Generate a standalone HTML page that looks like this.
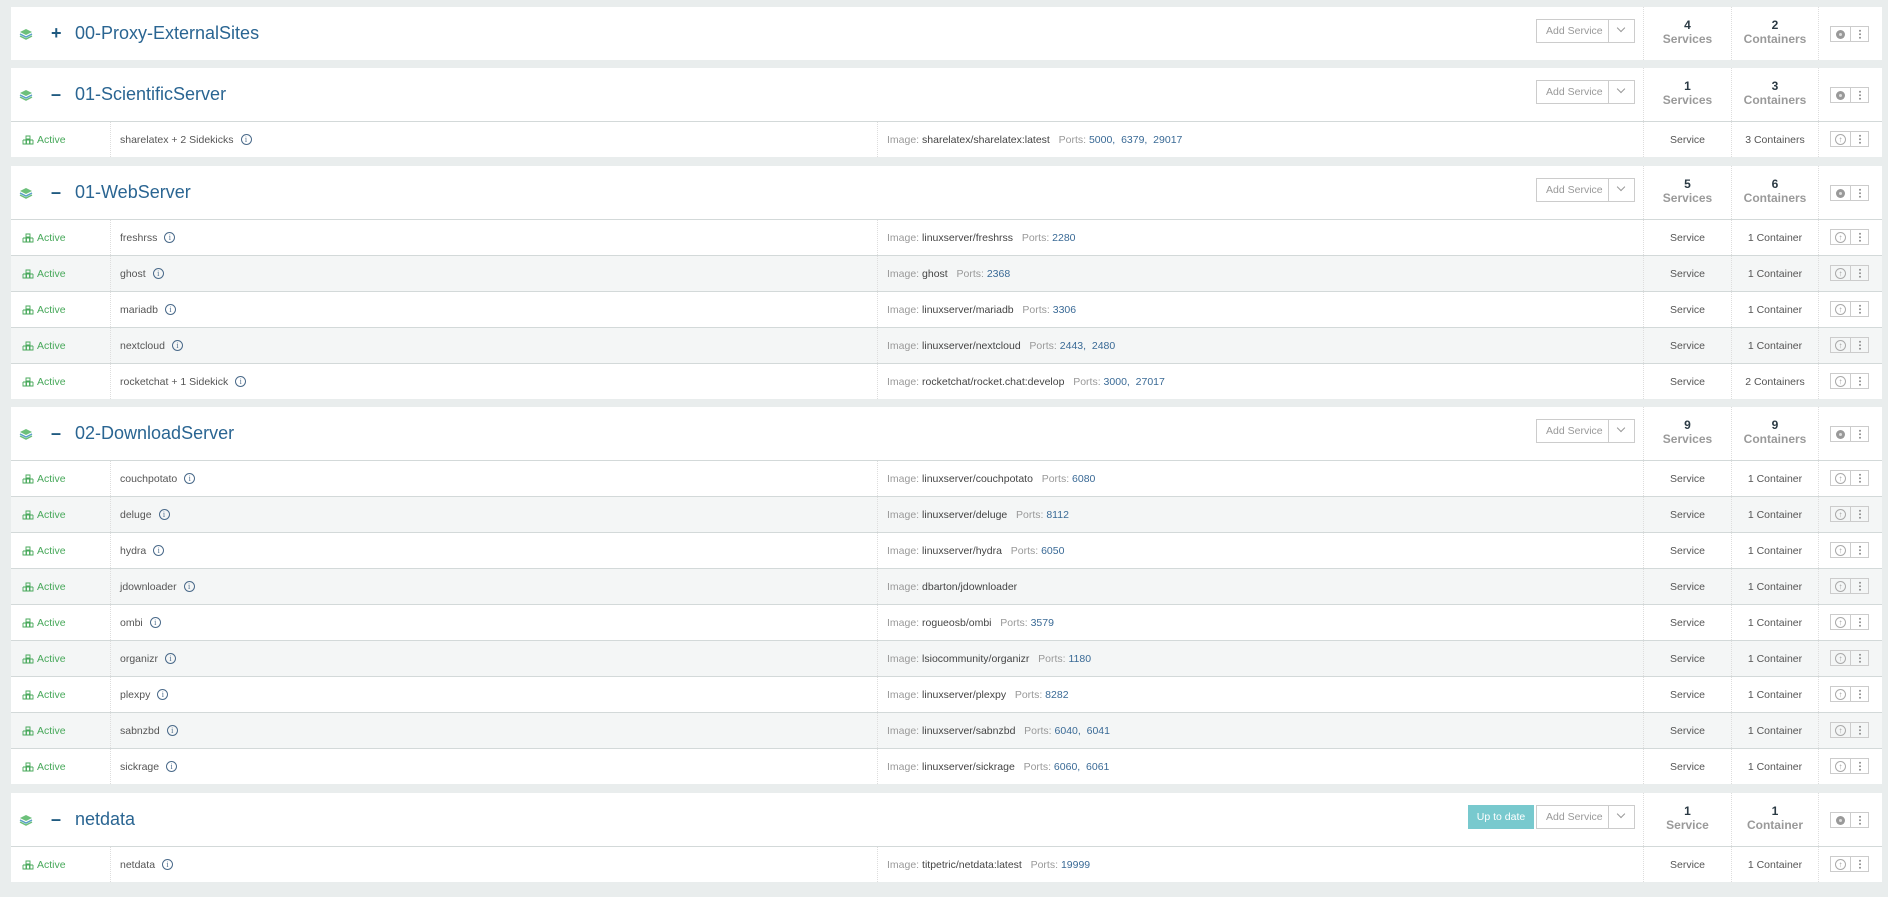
<!DOCTYPE html>
<html><head><meta charset="utf-8">
<style>
*{box-sizing:border-box;margin:0;padding:0}
body{width:1888px;height:897px;background:#e9eded;font-family:"Liberation Sans",sans-serif;position:relative;overflow:hidden}
.card{position:absolute;left:11px;width:1871px;background:#fff}
.hd{position:relative;height:53px}
.hd .ic{position:absolute;left:8px;top:21px}
.hd .tg{position:absolute;left:40px;top:16px;font-size:18px;font-weight:bold;color:#1f5a80}
.hd .tt{position:absolute;left:64px;top:16px;font-size:18px;color:#2a6592}
.addb{position:absolute;left:1525px;top:12px;width:99px;height:24px;border:1px solid #ccc;font-size:10.5px;color:#999;line-height:22px}
.addb span{position:absolute;left:9px}
.addb i{position:absolute;left:71px;top:0;width:1px;height:22px;background:#ccc}
.addb b{position:absolute;left:81px;top:5px;width:6px;height:6px;border-right:1.5px solid #999;border-bottom:1.5px solid #999;transform:rotate(45deg)}
.upd{position:absolute;left:1457px;top:12px;width:66px;height:24px;background:#78c9ce;color:#fff;font-size:10.5px;line-height:24px;text-align:center}
.st{position:absolute;top:0;height:53px;border-left:1px dotted #ddd;text-align:center;font-size:12px;font-weight:bold}
.st .n{color:#2b3a44;margin-top:12px;line-height:13px}
.st .l{color:#9a9a9a;line-height:14px}
.s1{left:1632px;width:88px}.s2{left:1720px;width:87px}
.s3{position:absolute;left:1807px;top:0;height:53px;border-left:1px dotted #ddd;width:64px}
.acts{position:absolute;left:11px;top:19px;width:39px;height:16px;border:1px solid #ccc}
.acts i{position:absolute;left:19px;top:0;width:1px;height:14px;background:#ccc}
.acts .o{position:absolute;left:5px;top:3px;width:9px;height:9px;border-radius:50%;background:#999}
.acts .o:after{content:"";position:absolute;left:3px;top:3px;width:3px;height:3px;border-radius:50%;background:#ddd}
.dots{position:absolute;left:28px;top:2px;width:2px;height:10px;background:radial-gradient(circle,#999 0.9px,transparent 1.1px) 0 0/2px 3.5px repeat-y}
.row{position:relative;height:36px;border-top:1px solid #d3d9d9;font-size:10.5px;display:flex;align-items:center}
.row.g{background:#f4f6f6}
.row>div{height:35px;display:flex;align-items:center}
.c1{width:100px;border-right:1px dotted #ddd;color:#47a85a;padding-left:11px}
.c2{width:766px;padding-left:9px;color:#555}
.c3{width:766px;padding-left:9px;border-left:1px dotted #ddd;color:#444}
.c3 .k{color:#999}
.c3 .p{color:#3a6a96}
.c4{width:88px;border-left:1px dotted #ddd;justify-content:center;color:#555}
.c5{width:87px;border-left:1px dotted #ddd;justify-content:center;color:#555}
.c6{width:64px;border-left:1px dotted #ddd;position:relative}
.c6 .acts{left:11px;top:9px}
.up{position:absolute;left:4px;top:2px;width:11px;height:11px;border:1px solid #aaa;border-radius:50%;font-size:8px;line-height:9px;text-align:center;color:#999}
.inf{display:inline-block;width:11px;height:11px;border:1px solid #4a6a8a;border-radius:50%;font-size:8px;line-height:9px;text-align:center;color:#4a6a8a;margin-left:7px;font-family:"Liberation Serif",serif}
.ai{display:inline-block;width:12px;height:10px;margin-right:3px;vertical-align:middle}
</style></head><body>

<div class="card" style="top:7px;height:53px">
 <div class="hd">
  <svg class="ic" width="14" height="12" viewBox="0 0 14 12"><path d="M7 1L13 4L7 7L1 4Z" fill="#6cc07a"/><path d="M1 6L7 9L13 6" stroke="#5aa0c8" fill="none" stroke-width="1.5"/><path d="M1 8L7 11L13 8" stroke="#6cc07a" fill="none" stroke-width="1.5"/></svg>
  <div class="tg">+</div><div class="tt">00-Proxy-ExternalSites</div>
  <div class="addb"><span>Add Service</span><i></i><b></b></div>
  <div class="st s1"><div class="n">4</div><div class="l">Services</div></div>
  <div class="st s2"><div class="n">2</div><div class="l">Containers</div></div>
  <div class="s3"><div class="acts"><div class="o"></div><i></i><div class="dots"></div></div></div>
 </div>
</div>

<div class="card" style="top:68px">
 <div class="hd">
  <svg class="ic" width="14" height="12" viewBox="0 0 14 12"><path d="M7 1L13 4L7 7L1 4Z" fill="#6cc07a"/><path d="M1 6L7 9L13 6" stroke="#5aa0c8" fill="none" stroke-width="1.5"/><path d="M1 8L7 11L13 8" stroke="#6cc07a" fill="none" stroke-width="1.5"/></svg>
  <div class="tg">–</div><div class="tt">01-ScientificServer</div>
  <div class="addb"><span>Add Service</span><i></i><b></b></div>
  <div class="st s1"><div class="n">1</div><div class="l">Services</div></div>
  <div class="st s2"><div class="n">3</div><div class="l">Containers</div></div>
  <div class="s3"><div class="acts"><div class="o"></div><i></i><div class="dots"></div></div></div>
 </div>
 <div class="row"><div class="c1"><svg class="ai" viewBox="0 0 12 10"><path d="M4 1h4v3H4zM1 5h10M1 5v4h3V5M4.5 5v4h3V5M8 5v4h3V5" stroke="#47a85a" fill="none" stroke-width="0.9"/></svg>Active</div><div class="c2">sharelatex + 2 Sidekicks<span class="inf">i</span></div><div class="c3"><span class="k">Image:&nbsp;</span>sharelatex/sharelatex:latest&nbsp;&nbsp;&nbsp;<span class="k">Ports:&nbsp;</span><span class="p">5000,&nbsp;&nbsp;6379,&nbsp;&nbsp;29017</span></div><div class="c4">Service</div><div class="c5">3 Containers</div><div class="c6"><div class="acts"><div class="up">↑</div><i></i><div class="dots"></div></div></div></div>
</div>

<div class="card" style="top:166px">
 <div class="hd">
  <svg class="ic" width="14" height="12" viewBox="0 0 14 12"><path d="M7 1L13 4L7 7L1 4Z" fill="#6cc07a"/><path d="M1 6L7 9L13 6" stroke="#5aa0c8" fill="none" stroke-width="1.5"/><path d="M1 8L7 11L13 8" stroke="#6cc07a" fill="none" stroke-width="1.5"/></svg>
  <div class="tg">–</div><div class="tt">01-WebServer</div>
  <div class="addb"><span>Add Service</span><i></i><b></b></div>
  <div class="st s1"><div class="n">5</div><div class="l">Services</div></div>
  <div class="st s2"><div class="n">6</div><div class="l">Containers</div></div>
  <div class="s3"><div class="acts"><div class="o"></div><i></i><div class="dots"></div></div></div>
 </div>
 <div class="row"><div class="c1"><svg class="ai" viewBox="0 0 12 10"><path d="M4 1h4v3H4zM1 5h10M1 5v4h3V5M4.5 5v4h3V5M8 5v4h3V5" stroke="#47a85a" fill="none" stroke-width="0.9"/></svg>Active</div><div class="c2">freshrss<span class="inf">i</span></div><div class="c3"><span class="k">Image:&nbsp;</span>linuxserver/freshrss&nbsp;&nbsp;&nbsp;<span class="k">Ports:&nbsp;</span><span class="p">2280</span></div><div class="c4">Service</div><div class="c5">1 Container</div><div class="c6"><div class="acts"><div class="up">↑</div><i></i><div class="dots"></div></div></div></div>
 <div class="row g"><div class="c1"><svg class="ai" viewBox="0 0 12 10"><path d="M4 1h4v3H4zM1 5h10M1 5v4h3V5M4.5 5v4h3V5M8 5v4h3V5" stroke="#47a85a" fill="none" stroke-width="0.9"/></svg>Active</div><div class="c2">ghost<span class="inf">i</span></div><div class="c3"><span class="k">Image:&nbsp;</span>ghost&nbsp;&nbsp;&nbsp;<span class="k">Ports:&nbsp;</span><span class="p">2368</span></div><div class="c4">Service</div><div class="c5">1 Container</div><div class="c6"><div class="acts"><div class="up">↑</div><i></i><div class="dots"></div></div></div></div>
 <div class="row"><div class="c1"><svg class="ai" viewBox="0 0 12 10"><path d="M4 1h4v3H4zM1 5h10M1 5v4h3V5M4.5 5v4h3V5M8 5v4h3V5" stroke="#47a85a" fill="none" stroke-width="0.9"/></svg>Active</div><div class="c2">mariadb<span class="inf">i</span></div><div class="c3"><span class="k">Image:&nbsp;</span>linuxserver/mariadb&nbsp;&nbsp;&nbsp;<span class="k">Ports:&nbsp;</span><span class="p">3306</span></div><div class="c4">Service</div><div class="c5">1 Container</div><div class="c6"><div class="acts"><div class="up">↑</div><i></i><div class="dots"></div></div></div></div>
 <div class="row g"><div class="c1"><svg class="ai" viewBox="0 0 12 10"><path d="M4 1h4v3H4zM1 5h10M1 5v4h3V5M4.5 5v4h3V5M8 5v4h3V5" stroke="#47a85a" fill="none" stroke-width="0.9"/></svg>Active</div><div class="c2">nextcloud<span class="inf">i</span></div><div class="c3"><span class="k">Image:&nbsp;</span>linuxserver/nextcloud&nbsp;&nbsp;&nbsp;<span class="k">Ports:&nbsp;</span><span class="p">2443,&nbsp;&nbsp;2480</span></div><div class="c4">Service</div><div class="c5">1 Container</div><div class="c6"><div class="acts"><div class="up">↑</div><i></i><div class="dots"></div></div></div></div>
 <div class="row"><div class="c1"><svg class="ai" viewBox="0 0 12 10"><path d="M4 1h4v3H4zM1 5h10M1 5v4h3V5M4.5 5v4h3V5M8 5v4h3V5" stroke="#47a85a" fill="none" stroke-width="0.9"/></svg>Active</div><div class="c2">rocketchat + 1 Sidekick<span class="inf">i</span></div><div class="c3"><span class="k">Image:&nbsp;</span>rocketchat/rocket.chat:develop&nbsp;&nbsp;&nbsp;<span class="k">Ports:&nbsp;</span><span class="p">3000,&nbsp;&nbsp;27017</span></div><div class="c4">Service</div><div class="c5">2 Containers</div><div class="c6"><div class="acts"><div class="up">↑</div><i></i><div class="dots"></div></div></div></div>
</div>

<div class="card" style="top:407px">
 <div class="hd">
  <svg class="ic" width="14" height="12" viewBox="0 0 14 12"><path d="M7 1L13 4L7 7L1 4Z" fill="#6cc07a"/><path d="M1 6L7 9L13 6" stroke="#5aa0c8" fill="none" stroke-width="1.5"/><path d="M1 8L7 11L13 8" stroke="#6cc07a" fill="none" stroke-width="1.5"/></svg>
  <div class="tg">–</div><div class="tt">02-DownloadServer</div>
  <div class="addb"><span>Add Service</span><i></i><b></b></div>
  <div class="st s1"><div class="n">9</div><div class="l">Services</div></div>
  <div class="st s2"><div class="n">9</div><div class="l">Containers</div></div>
  <div class="s3"><div class="acts"><div class="o"></div><i></i><div class="dots"></div></div></div>
 </div>
 <div class="row"><div class="c1"><svg class="ai" viewBox="0 0 12 10"><path d="M4 1h4v3H4zM1 5h10M1 5v4h3V5M4.5 5v4h3V5M8 5v4h3V5" stroke="#47a85a" fill="none" stroke-width="0.9"/></svg>Active</div><div class="c2">couchpotato<span class="inf">i</span></div><div class="c3"><span class="k">Image:&nbsp;</span>linuxserver/couchpotato&nbsp;&nbsp;&nbsp;<span class="k">Ports:&nbsp;</span><span class="p">6080</span></div><div class="c4">Service</div><div class="c5">1 Container</div><div class="c6"><div class="acts"><div class="up">↑</div><i></i><div class="dots"></div></div></div></div>
 <div class="row g"><div class="c1"><svg class="ai" viewBox="0 0 12 10"><path d="M4 1h4v3H4zM1 5h10M1 5v4h3V5M4.5 5v4h3V5M8 5v4h3V5" stroke="#47a85a" fill="none" stroke-width="0.9"/></svg>Active</div><div class="c2">deluge<span class="inf">i</span></div><div class="c3"><span class="k">Image:&nbsp;</span>linuxserver/deluge&nbsp;&nbsp;&nbsp;<span class="k">Ports:&nbsp;</span><span class="p">8112</span></div><div class="c4">Service</div><div class="c5">1 Container</div><div class="c6"><div class="acts"><div class="up">↑</div><i></i><div class="dots"></div></div></div></div>
 <div class="row"><div class="c1"><svg class="ai" viewBox="0 0 12 10"><path d="M4 1h4v3H4zM1 5h10M1 5v4h3V5M4.5 5v4h3V5M8 5v4h3V5" stroke="#47a85a" fill="none" stroke-width="0.9"/></svg>Active</div><div class="c2">hydra<span class="inf">i</span></div><div class="c3"><span class="k">Image:&nbsp;</span>linuxserver/hydra&nbsp;&nbsp;&nbsp;<span class="k">Ports:&nbsp;</span><span class="p">6050</span></div><div class="c4">Service</div><div class="c5">1 Container</div><div class="c6"><div class="acts"><div class="up">↑</div><i></i><div class="dots"></div></div></div></div>
 <div class="row g"><div class="c1"><svg class="ai" viewBox="0 0 12 10"><path d="M4 1h4v3H4zM1 5h10M1 5v4h3V5M4.5 5v4h3V5M8 5v4h3V5" stroke="#47a85a" fill="none" stroke-width="0.9"/></svg>Active</div><div class="c2">jdownloader<span class="inf">i</span></div><div class="c3"><span class="k">Image:&nbsp;</span>dbarton/jdownloader</div><div class="c4">Service</div><div class="c5">1 Container</div><div class="c6"><div class="acts"><div class="up">↑</div><i></i><div class="dots"></div></div></div></div>
 <div class="row"><div class="c1"><svg class="ai" viewBox="0 0 12 10"><path d="M4 1h4v3H4zM1 5h10M1 5v4h3V5M4.5 5v4h3V5M8 5v4h3V5" stroke="#47a85a" fill="none" stroke-width="0.9"/></svg>Active</div><div class="c2">ombi<span class="inf">i</span></div><div class="c3"><span class="k">Image:&nbsp;</span>rogueosb/ombi&nbsp;&nbsp;&nbsp;<span class="k">Ports:&nbsp;</span><span class="p">3579</span></div><div class="c4">Service</div><div class="c5">1 Container</div><div class="c6"><div class="acts"><div class="up">↑</div><i></i><div class="dots"></div></div></div></div>
 <div class="row g"><div class="c1"><svg class="ai" viewBox="0 0 12 10"><path d="M4 1h4v3H4zM1 5h10M1 5v4h3V5M4.5 5v4h3V5M8 5v4h3V5" stroke="#47a85a" fill="none" stroke-width="0.9"/></svg>Active</div><div class="c2">organizr<span class="inf">i</span></div><div class="c3"><span class="k">Image:&nbsp;</span>lsiocommunity/organizr&nbsp;&nbsp;&nbsp;<span class="k">Ports:&nbsp;</span><span class="p">1180</span></div><div class="c4">Service</div><div class="c5">1 Container</div><div class="c6"><div class="acts"><div class="up">↑</div><i></i><div class="dots"></div></div></div></div>
 <div class="row"><div class="c1"><svg class="ai" viewBox="0 0 12 10"><path d="M4 1h4v3H4zM1 5h10M1 5v4h3V5M4.5 5v4h3V5M8 5v4h3V5" stroke="#47a85a" fill="none" stroke-width="0.9"/></svg>Active</div><div class="c2">plexpy<span class="inf">i</span></div><div class="c3"><span class="k">Image:&nbsp;</span>linuxserver/plexpy&nbsp;&nbsp;&nbsp;<span class="k">Ports:&nbsp;</span><span class="p">8282</span></div><div class="c4">Service</div><div class="c5">1 Container</div><div class="c6"><div class="acts"><div class="up">↑</div><i></i><div class="dots"></div></div></div></div>
 <div class="row g"><div class="c1"><svg class="ai" viewBox="0 0 12 10"><path d="M4 1h4v3H4zM1 5h10M1 5v4h3V5M4.5 5v4h3V5M8 5v4h3V5" stroke="#47a85a" fill="none" stroke-width="0.9"/></svg>Active</div><div class="c2">sabnzbd<span class="inf">i</span></div><div class="c3"><span class="k">Image:&nbsp;</span>linuxserver/sabnzbd&nbsp;&nbsp;&nbsp;<span class="k">Ports:&nbsp;</span><span class="p">6040,&nbsp;&nbsp;6041</span></div><div class="c4">Service</div><div class="c5">1 Container</div><div class="c6"><div class="acts"><div class="up">↑</div><i></i><div class="dots"></div></div></div></div>
 <div class="row"><div class="c1"><svg class="ai" viewBox="0 0 12 10"><path d="M4 1h4v3H4zM1 5h10M1 5v4h3V5M4.5 5v4h3V5M8 5v4h3V5" stroke="#47a85a" fill="none" stroke-width="0.9"/></svg>Active</div><div class="c2">sickrage<span class="inf">i</span></div><div class="c3"><span class="k">Image:&nbsp;</span>linuxserver/sickrage&nbsp;&nbsp;&nbsp;<span class="k">Ports:&nbsp;</span><span class="p">6060,&nbsp;&nbsp;6061</span></div><div class="c4">Service</div><div class="c5">1 Container</div><div class="c6"><div class="acts"><div class="up">↑</div><i></i><div class="dots"></div></div></div></div>
</div>

<div class="card" style="top:793px">
 <div class="hd">
  <svg class="ic" width="14" height="12" viewBox="0 0 14 12"><path d="M7 1L13 4L7 7L1 4Z" fill="#6cc07a"/><path d="M1 6L7 9L13 6" stroke="#5aa0c8" fill="none" stroke-width="1.5"/><path d="M1 8L7 11L13 8" stroke="#6cc07a" fill="none" stroke-width="1.5"/></svg>
  <div class="tg">–</div><div class="tt">netdata</div>
  <div class="upd">Up to date</div>
  <div class="addb"><span>Add Service</span><i></i><b></b></div>
  <div class="st s1"><div class="n">1</div><div class="l">Service</div></div>
  <div class="st s2"><div class="n">1</div><div class="l">Container</div></div>
  <div class="s3"><div class="acts"><div class="o"></div><i></i><div class="dots"></div></div></div>
 </div>
 <div class="row"><div class="c1"><svg class="ai" viewBox="0 0 12 10"><path d="M4 1h4v3H4zM1 5h10M1 5v4h3V5M4.5 5v4h3V5M8 5v4h3V5" stroke="#47a85a" fill="none" stroke-width="0.9"/></svg>Active</div><div class="c2">netdata<span class="inf">i</span></div><div class="c3"><span class="k">Image:&nbsp;</span>titpetric/netdata:latest&nbsp;&nbsp;&nbsp;<span class="k">Ports:&nbsp;</span><span class="p">19999</span></div><div class="c4">Service</div><div class="c5">1 Container</div><div class="c6"><div class="acts"><div class="up">↑</div><i></i><div class="dots"></div></div></div></div>
</div>
</body></html>
